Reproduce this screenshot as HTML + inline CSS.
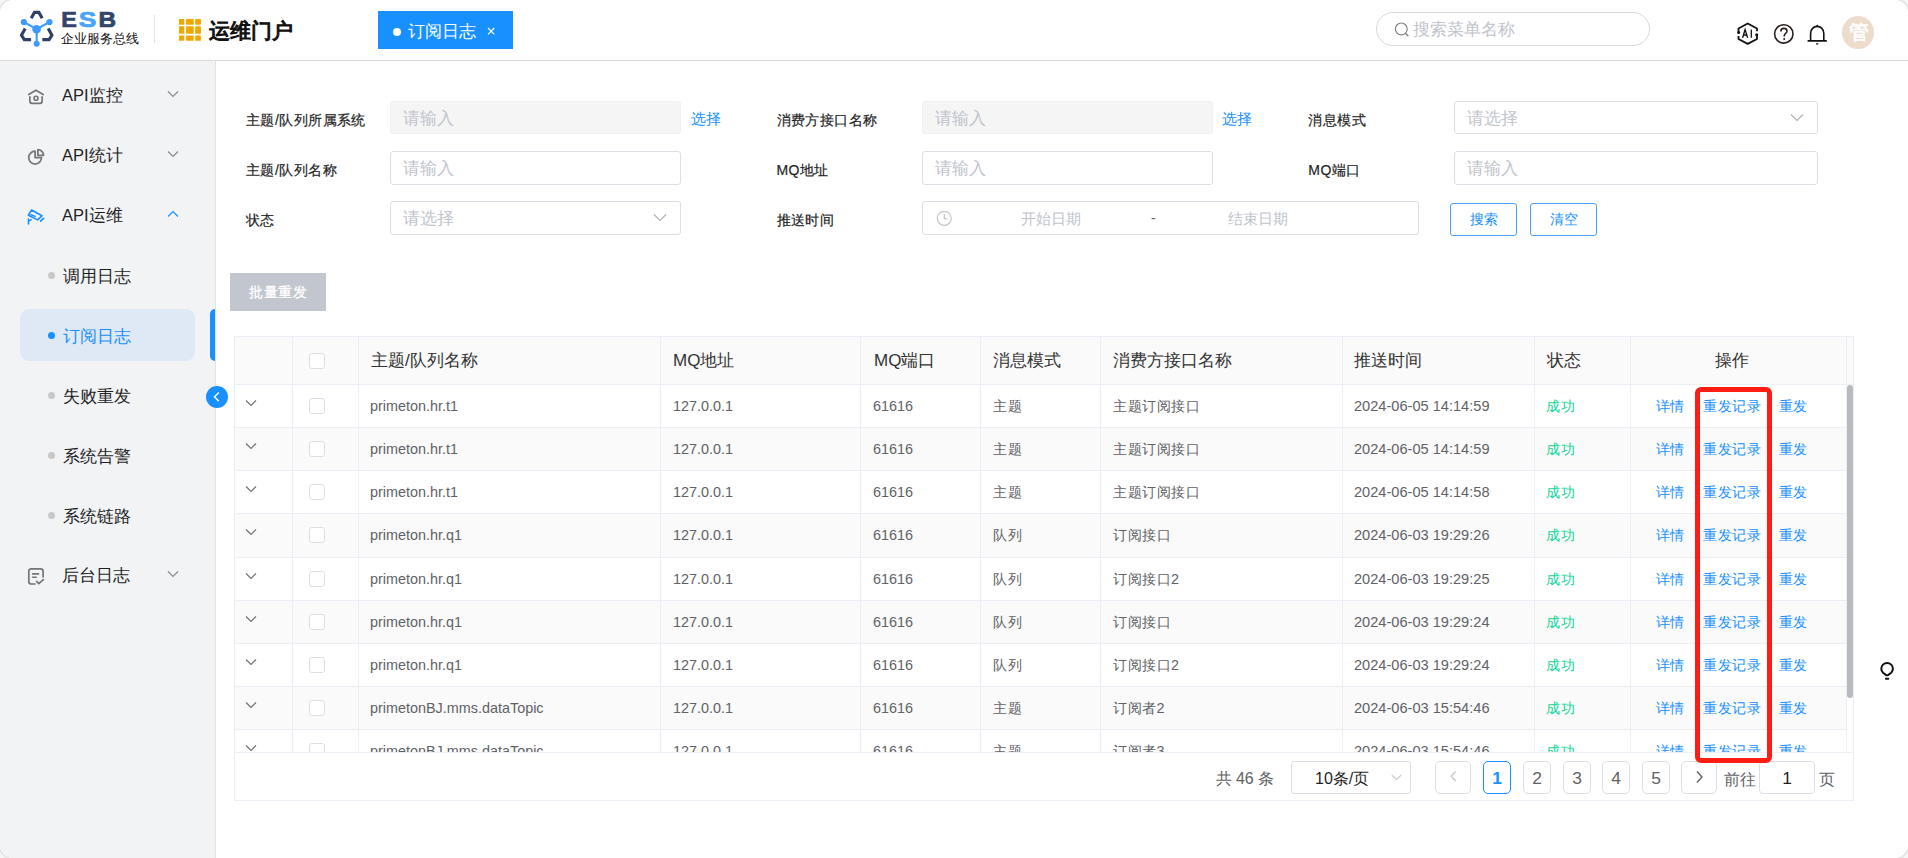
<!DOCTYPE html>
<html><head><meta charset="utf-8">
<style>
*{box-sizing:border-box;margin:0;padding:0}
html,body{width:1908px;height:858px;overflow:hidden;background:#f6f6f6}
body{font-family:"Liberation Sans",sans-serif;color:#303133;position:relative;-webkit-font-smoothing:antialiased}
.app{position:absolute;left:0;top:0;width:1908px;height:858px;background:#fff;border-radius:13px;overflow:hidden;box-shadow:0 0 2px 1px rgba(0,0,0,0.13)}
.abs{position:absolute}
.t{position:absolute;white-space:nowrap;line-height:1}
.hdr{position:absolute;left:0;top:0;width:1908px;height:61px;border-bottom:1px solid #dadada;background:#fff}
.side{position:absolute;left:0;top:61px;width:216px;height:797px;background:#f2f3f5;border-right:1px solid #e3e3e3}
.mi{position:absolute;left:62px;font-size:16.5px;color:#1f1f1f}
.dot{position:absolute;width:7px;height:7px;border-radius:50%;background:#c4c4c4}
.lbl{position:absolute;font-size:14px;letter-spacing:0.45px;color:#1f1f1f;line-height:1;-webkit-text-stroke:0.2px #1f1f1f}
.inp{position:absolute;height:33px;border:1px solid #dcdfe6;border-radius:3px;background:#fff}
.inp.dis{background:#f5f5f5;border-color:#f0f0f0}
.ph{position:absolute;left:12px;top:8.8px;font-size:16.6px;color:#c0c4cc;line-height:1;white-space:nowrap}
.link{position:absolute;font-size:14.6px;color:#1890ff;line-height:1}
.btn{position:absolute;height:33px;border:1px solid #4ba0f8;border-radius:3px;color:#1890ff;font-size:14.4px;text-align:center;line-height:31px;background:#fff}
.tbl{position:absolute;left:234px;top:336px;width:1620px;height:465px;border:1px solid #ebeef5}
.vl{position:absolute;width:1px;background:#ebeef5}
.hl{position:absolute;height:1px;background:#ebeef5}
.th{position:absolute;font-size:17px;color:#333;line-height:1;white-space:nowrap}
.td{position:absolute;font-size:14.4px;color:#606266;line-height:1;white-space:nowrap}
.cb{position:absolute;width:16px;height:16px;border:1px solid #dcdfe6;border-radius:3px;background:#fff}
.ok{color:#13d69b}
.op{color:#1890ff}
.pg{position:absolute;top:761px;height:33px;border:1px solid #dcdfe6;border-radius:5px;background:#fff;font-size:17.4px;color:#606266;text-align:center;line-height:33.5px}
</style></head><body><div class="app">

<div class="hdr">
<svg class="abs" style="left:0;top:0" width="60" height="60" viewBox="0 0 60 60">
<g fill="none" stroke="#2f3f6a" stroke-width="3.1" stroke-linejoin="miter" stroke-linecap="butt">
<path d="M31.2 18.2 L34.5 12.4 L38.9 12.4 L42.2 18.2"/>
<path d="M25.2 28.6 L21.5 35.3 L24.3 39.6 L31.1 39.6"/>
<path d="M48.2 28.6 L51.9 35.3 L49.1 39.6 L42.3 39.6"/>
</g>
<g fill="#3d9bfb" stroke="#3d9bfb">
<line x1="23.8" y1="22" x2="36.6" y2="29.2" stroke-width="2.1"/>
<line x1="49.5" y1="22" x2="36.6" y2="29.2" stroke-width="2.1"/>
<line x1="36.6" y1="29.2" x2="36.7" y2="43.7" stroke-width="2.1"/>
<circle cx="23.8" cy="22" r="3.1" stroke="none"/>
<circle cx="49.5" cy="22" r="3.1" stroke="none"/>
<circle cx="36.6" cy="29.2" r="4.3" stroke="none"/>
<circle cx="36.7" cy="43.7" r="3" stroke="none"/>
</g></svg>
<svg class="abs" style="left:0;top:0" width="130" height="32" viewBox="0 0 130 32"><g font-family="Liberation Sans" font-weight="bold" font-size="22.3" stroke-width="0.7">
<text x="61.2" y="26.9" textLength="15.6" lengthAdjust="spacingAndGlyphs" fill="#33446b" stroke="#33446b">E</text>
<text x="78.8" y="26.9" textLength="17.6" lengthAdjust="spacingAndGlyphs" fill="#4aa3fa" stroke="#4aa3fa">S</text>
<text x="98.6" y="26.9" textLength="17.6" lengthAdjust="spacingAndGlyphs" fill="#33446b" stroke="#33446b">B</text>
</g></svg>
<div class="t" style="left:61px;top:33px;font-size:12.65px;font-weight:500;color:#111">企业服务总线</div>
<div class="abs" style="left:154px;top:15px;width:1px;height:28px;background:#e0e3ea"></div>
<svg class="abs" style="left:179px;top:19px" width="22" height="22" viewBox="0 0 22 22"><g fill="#f0a800"><rect x="0.0" y="0.1" width="5.3" height="5.6" rx="0.6"/><rect x="0.0" y="7.3" width="5.3" height="7.5" rx="0.6"/><rect x="0.0" y="16.4" width="5.3" height="5.4" rx="0.6"/><rect x="7.1" y="0.1" width="7.6" height="5.6" rx="0.6"/><rect x="7.1" y="7.3" width="7.6" height="7.5" rx="0.6"/><rect x="7.1" y="16.4" width="7.6" height="5.4" rx="0.6"/><rect x="16.2" y="0.1" width="5.7" height="5.6" rx="0.6"/><rect x="16.2" y="7.3" width="5.7" height="7.5" rx="0.6"/><rect x="16.2" y="16.4" width="5.7" height="5.4" rx="0.6"/></g></svg>
<div class="t" style="left:209px;top:20.8px;font-size:21.3px;color:#111;-webkit-text-stroke:1.1px #111">运维门户</div>
<div class="abs" style="left:378px;top:11px;width:135px;height:38px;background:#1890ff"></div>
<div class="abs" style="left:393px;top:28px;width:8px;height:8px;border-radius:50%;background:#fff"></div>
<div class="t" style="left:407.7px;top:23px;font-size:17px;color:#fff">订阅日志</div>
<svg class="abs" style="left:486.5px;top:27.3px" width="8" height="8" viewBox="0 0 8 8"><path d="M1 1L7.3 7.3M7.3 1L1 7.3" stroke="#fff" stroke-width="1.1"/></svg>
<div class="abs" style="left:1376px;top:12px;width:274px;height:34px;border:1px solid #dadada;border-radius:17px"></div>
<svg class="abs" style="left:1394px;top:22px" width="16" height="16" viewBox="0 0 16 16"><circle cx="7.3" cy="6.9" r="5.9" fill="none" stroke="#808080" stroke-width="1.2"/><path d="M11.4 11.2L14.3 14.3" stroke="#808080" stroke-width="1.4"/></svg>
<div class="t" style="left:1413px;top:21.8px;font-size:16.8px;color:#c0c4cc">搜索菜单名称</div>
<svg class="abs" style="left:1732px;top:18px" width="30" height="30" viewBox="0 0 30 30">
<g fill="none" stroke="#111" stroke-width="1.8" stroke-linejoin="round">
<path d="M6.5 14.5 L6.5 10.5 L15.7 5.5 L25 10.5 L25 13.3"/>
<path d="M25 16.2 L25 21 L15.7 25.9 L6.5 21 L6.5 18"/>
<path d="M10.6 19.8 L13.1 11.6 L15.6 19.8 M11.5 17 L14.7 17" stroke-width="1.35" stroke-linejoin="miter"/>
<path d="M19.3 11.4 L19.3 19.8" stroke-width="1.3"/>
</g>
<circle cx="6.7" cy="14.6" r="1.5" fill="#111"/><circle cx="24.7" cy="16.7" r="1.5" fill="#111"/>
</svg>
<svg class="abs" style="left:1773px;top:23px" width="22" height="22" viewBox="0 0 22 22">
<circle cx="10.8" cy="10.9" r="9.2" fill="none" stroke="#2a1f1f" stroke-width="1.6"/>
<path d="M7.8 8.4 C7.8 6.5 9.2 5.4 10.9 5.4 C12.7 5.4 14 6.6 14 8.2 C14 10.2 11.2 10.6 11.2 12.9 L11.2 13.6" fill="none" stroke="#2a1f1f" stroke-width="1.6"/>
<circle cx="11.2" cy="16.1" r="1" fill="#2a1f1f"/>
</svg>
<svg class="abs" style="left:1806px;top:23px" width="23" height="23" viewBox="0 0 23 23">
<path d="M4.6 17.6 L4.6 10.4 C4.6 6.3 7.5 3.4 11.2 3.4 C14.9 3.4 17.8 6.3 17.8 10.4 L17.8 17.6" fill="none" stroke="#111" stroke-width="1.6"/>
<path d="M1.6 17.9 L20.8 17.9" stroke="#111" stroke-width="1.7"/>
<path d="M10.1 3.0 L11.2 1.6 L12.3 3.0Z" fill="#111"/>
<path d="M10.1 20.8 L12.3 20.8" stroke="#111" stroke-width="1.3"/>
</svg>
<div class="abs" style="left:1842px;top:16px;width:32px;height:33px;border-radius:50%;background:#eddccb"></div>
<div class="t" style="left:1848.5px;top:22.5px;font-size:19.5px;color:#fff;-webkit-text-stroke:0.7px #fff">管</div>
</div>
<div class="side"></div>
<div class="abs" style="left:20px;top:309px;width:175px;height:52px;border-radius:9px;background:#dfe9f5"></div>
<div class="abs" style="left:210px;top:309px;width:5px;height:52px;border-radius:5px 0 0 5px;background:#1890ff"></div>
<svg class="abs" style="left:20px;top:80px" width="32" height="32" viewBox="0 0 32 32">
<path d="M8.7 14.6 L15.9 10.3 L23.2 14.6" fill="none" stroke="#747678" stroke-width="1.7" stroke-linecap="round" stroke-linejoin="round"/>
<path d="M9.9 16.3 L9.9 21.3 Q9.9 23.3 11.9 23.3 L20.1 23.3 Q22.1 23.3 22.1 21.3 L22.1 16.3" fill="none" stroke="#747678" stroke-width="1.7"/>
<circle cx="16" cy="18.3" r="2.0" fill="none" stroke="#747678" stroke-width="1.6"/>
</svg>
<svg class="abs" style="left:20px;top:140px" width="32" height="32" viewBox="0 0 32 32">
<path d="M15.1 11.2 A6.4 6.4 0 1 0 21.5 17.6 L15.1 17.6 Z" fill="none" stroke="#747678" stroke-width="1.75" stroke-linejoin="round"/>
<path d="M17.9 9.7 L17.9 15.3 L23.5 15.3 A5.6 5.6 0 0 0 17.9 9.7 Z" fill="none" stroke="#747678" stroke-width="1.75" stroke-linejoin="round"/>
</svg>
<svg class="abs" style="left:20px;top:200px" width="32" height="32" viewBox="0 0 32 32">
<path d="M11.6 10.0 L22.0 15.8 L17.5 19.9 L8.4 15.2 Z" fill="none" stroke="#1890ff" stroke-width="1.6" stroke-linejoin="round"/>
<path d="M11 14.7 L15.2 16.4" stroke="#1890ff" stroke-width="1.5" stroke-linecap="round"/>
<path d="M8.5 19 L8.5 24 M8.5 21.4 L11.1 19.6" stroke="#1890ff" stroke-width="1.6" stroke-linecap="round"/>
<path d="M20.6 21.2 L23.6 18.4" stroke="#1890ff" stroke-width="1.7" stroke-linecap="round"/>
</svg>
<svg class="abs" style="left:20px;top:560px" width="32" height="32" viewBox="0 0 32 32">
<path d="M15.6 24 L11.3 24 Q8.8 24 8.8 21.5 L8.8 11.3 Q8.8 8.8 11.3 8.8 L20.6 8.8 Q23.1 8.8 23.1 11.3 L23.1 17.5" fill="none" stroke="#747678" stroke-width="1.7"/>
<path d="M12.6 13.9 L18.6 13.9 M12.6 17.3 L16.2 17.3" stroke="#747678" stroke-width="1.6" stroke-linecap="round"/>
<path d="M16.6 21.3 L18.8 23.6 L23.4 19.6" fill="none" stroke="#747678" stroke-width="1.7" stroke-linecap="round" stroke-linejoin="round"/>
</svg>
<div class="t mi" style="left:62px;top:87.4px;color:#1f1f1f">API监控</div>
<svg class="abs" style="left:167px;top:90px" width="12" height="8" viewBox="0 0 12 8"><path d="M1 1.5 L6 6.5 L11 1.5" fill="none" stroke="#8a8a8a" stroke-width="1.2"/></svg>
<div class="t mi" style="left:62px;top:147.4px;color:#1f1f1f">API统计</div>
<svg class="abs" style="left:167px;top:150px" width="12" height="8" viewBox="0 0 12 8"><path d="M1 1.5 L6 6.5 L11 1.5" fill="none" stroke="#8a8a8a" stroke-width="1.2"/></svg>
<div class="t mi" style="left:62px;top:207.4px;color:#1f1f1f">API运维</div>
<svg class="abs" style="left:167px;top:210px" width="12" height="8" viewBox="0 0 12 8"><path d="M1 6.5 L6 1.5 L11 6.5" fill="none" stroke="#1890ff" stroke-width="1.2"/></svg>
<div class="t mi" style="left:63px;top:268px;color:#1f1f1f">调用日志</div>
<div class="dot" style="left:48px;top:271.5px;background:#c8c8c8"></div>
<div class="t mi" style="left:63px;top:328px;color:#1890ff">订阅日志</div>
<div class="dot" style="left:48px;top:331.5px;background:#1890ff"></div>
<div class="t mi" style="left:63px;top:388px;color:#1f1f1f">失败重发</div>
<div class="dot" style="left:48px;top:391.5px;background:#c8c8c8"></div>
<div class="t mi" style="left:63px;top:448px;color:#1f1f1f">系统告警</div>
<div class="dot" style="left:48px;top:451.5px;background:#c8c8c8"></div>
<div class="t mi" style="left:63px;top:508px;color:#1f1f1f">系统链路</div>
<div class="dot" style="left:48px;top:511.5px;background:#c8c8c8"></div>
<div class="t mi" style="left:62px;top:567.4px;color:#1f1f1f">后台日志</div>
<svg class="abs" style="left:167px;top:570px" width="12" height="8" viewBox="0 0 12 8"><path d="M1 1.5 L6 6.5 L11 1.5" fill="none" stroke="#8a8a8a" stroke-width="1.2"/></svg>
<div class="abs" style="left:206px;top:386px;width:22px;height:22px;border-radius:50%;background:#1890ff"></div>
<svg class="abs" style="left:206px;top:386px" width="22" height="22" viewBox="0 0 22 22"><path d="M12.8 6.5 L8.5 10.8 L12.8 15.2" fill="none" stroke="#fff" stroke-width="1.4"/></svg>
<div class="lbl" style="left:246px;top:112.6px">主题/队列所属系统</div>
<div class="inp dis" style="left:390px;top:101px;width:291px;height:33px"><div class="ph">请输入</div></div>
<div class="link" style="left:690.7px;top:111.7px">选择</div>
<div class="lbl" style="left:246px;top:162.6px">主题/队列名称</div>
<div class="inp" style="left:390px;top:151px;width:291px;height:34px"><div class="ph">请输入</div></div>
<div class="lbl" style="left:246px;top:212.6px">状态</div>
<div class="inp" style="left:390px;top:201px;width:291px;height:34px"><div class="ph">请选择</div><svg class="abs" style="right:13px;top:11px" width="14" height="9" viewBox="0 0 14 9"><path d="M1 1.5 L7 7.5 L13 1.5" fill="none" stroke="#b0b3b8" stroke-width="1.2"/></svg></div>
<div class="lbl" style="left:776.5px;top:112.6px">消费方接口名称</div>
<div class="inp dis" style="left:922px;top:101px;width:291px;height:33px"><div class="ph">请输入</div></div>
<div class="link" style="left:1222.3px;top:111.7px">选择</div>
<div class="lbl" style="left:776.5px;top:162.6px">MQ地址</div>
<div class="inp" style="left:922px;top:151px;width:291px;height:34px"><div class="ph">请输入</div></div>
<div class="lbl" style="left:776.5px;top:212.6px">推送时间</div>
<div class="inp" style="left:922px;top:201px;width:497px;height:34px"></div>
<svg class="abs" style="left:936px;top:210px" width="17" height="17" viewBox="0 0 17 17"><circle cx="8.3" cy="8.3" r="7" fill="none" stroke="#c0c4cc" stroke-width="1.2"/><path d="M8.3 4 L8.3 8.6 L11.4 8.6" fill="none" stroke="#c0c4cc" stroke-width="1.2"/></svg>
<div class="t" style="left:1020.5px;top:210.5px;font-size:15px;color:#c0c4cc">开始日期</div>
<div class="t" style="left:1151px;top:211px;font-size:14.4px;color:#606266">-</div>
<div class="t" style="left:1228px;top:210.5px;font-size:15px;color:#c0c4cc">结束日期</div>
<div class="lbl" style="left:1308.3px;top:112.6px">消息模式</div>
<div class="inp" style="left:1454px;top:101px;width:364px;height:33px"><div class="ph">请选择</div><svg class="abs" style="right:13px;top:11px" width="14" height="9" viewBox="0 0 14 9"><path d="M1 1.5 L7 7.5 L13 1.5" fill="none" stroke="#b0b3b8" stroke-width="1.2"/></svg></div>
<div class="lbl" style="left:1308.3px;top:162.6px">MQ端口</div>
<div class="inp" style="left:1454px;top:151px;width:364px;height:34px"><div class="ph">请输入</div></div>
<div class="btn" style="left:1450px;top:203px;width:67px">搜索</div>
<div class="btn" style="left:1530px;top:203px;width:67px">清空</div>
<div class="abs" style="left:230px;top:273px;width:96px;height:38px;background:#c1c6cf"></div>
<div class="t" style="left:249px;top:284.5px;font-size:14px;letter-spacing:0.5px;color:#fff;-webkit-text-stroke:0.3px #fff">批量重发</div>
<div class="tbl"></div>
<div class="abs" style="left:235px;top:337px;width:1618px;height:47px;background:#fafafa"></div>
<div class="abs" style="left:235px;top:385px;width:1611px;height:42px;background:#fff"></div>
<div class="hl" style="left:235px;top:427px;width:1611px"></div>
<div class="abs" style="left:235px;top:428px;width:1611px;height:42px;background:#fafafa"></div>
<div class="hl" style="left:235px;top:470px;width:1611px"></div>
<div class="abs" style="left:235px;top:471px;width:1611px;height:42px;background:#fff"></div>
<div class="hl" style="left:235px;top:513px;width:1611px"></div>
<div class="abs" style="left:235px;top:514px;width:1611px;height:43px;background:#fafafa"></div>
<div class="hl" style="left:235px;top:557px;width:1611px"></div>
<div class="abs" style="left:235px;top:558px;width:1611px;height:42px;background:#fff"></div>
<div class="hl" style="left:235px;top:600px;width:1611px"></div>
<div class="abs" style="left:235px;top:601px;width:1611px;height:42px;background:#fafafa"></div>
<div class="hl" style="left:235px;top:643px;width:1611px"></div>
<div class="abs" style="left:235px;top:644px;width:1611px;height:42px;background:#fff"></div>
<div class="hl" style="left:235px;top:686px;width:1611px"></div>
<div class="abs" style="left:235px;top:687px;width:1611px;height:42px;background:#fafafa"></div>
<div class="hl" style="left:235px;top:729px;width:1611px"></div>
<div class="abs" style="left:235px;top:730px;width:1611px;height:22px;background:#fff"></div>
<div class="hl" style="left:235px;top:384px;width:1618px"></div>
<div class="hl" style="left:235px;top:752px;width:1618px"></div>
<div class="vl" style="left:292px;top:337px;height:415px"></div>
<div class="vl" style="left:358px;top:337px;height:415px"></div>
<div class="vl" style="left:660px;top:337px;height:415px"></div>
<div class="vl" style="left:860px;top:337px;height:415px"></div>
<div class="vl" style="left:980px;top:337px;height:415px"></div>
<div class="vl" style="left:1100px;top:337px;height:415px"></div>
<div class="vl" style="left:1342px;top:337px;height:415px"></div>
<div class="vl" style="left:1534px;top:337px;height:415px"></div>
<div class="vl" style="left:1630px;top:337px;height:415px"></div>
<div class="vl" style="left:1846px;top:337px;height:415px"></div>
<div class="th" style="left:371px;top:352.3px">主题/队列名称</div>
<div class="th" style="left:673px;top:352.3px">MQ地址</div>
<div class="th" style="left:874px;top:352.3px">MQ端口</div>
<div class="th" style="left:993px;top:352.3px">消息模式</div>
<div class="th" style="left:1113px;top:352.3px">消费方接口名称</div>
<div class="th" style="left:1354px;top:352.3px">推送时间</div>
<div class="th" style="left:1547px;top:352.3px">状态</div>
<div class="th" style="left:1715px;top:352.3px">操作</div>
<div class="cb" style="left:309px;top:353px"></div>
<div class="abs" style="left:235px;top:385px;width:1611px;height:367px;overflow:hidden">
<svg class="abs" style="left:9.5px;top:14.0px" width="12" height="8" viewBox="0 0 12 8"><path d="M1 1.5 L6 6.5 L11 1.5" fill="none" stroke="#6e6e6e" stroke-width="1.1"/></svg>
<div class="cb" style="left:74px;top:13.0px"></div>
<div class="td" style="left:135px;top:14.0px;">primeton.hr.t1</div>
<div class="td" style="left:438px;top:14.0px;">127.0.0.1</div>
<div class="td" style="left:638px;top:14.0px;">61616</div>
<div class="td" style="left:758px;top:14.0px;letter-spacing:0.5px;">主题</div>
<div class="td" style="left:878px;top:14.0px;letter-spacing:0.5px;">主题订阅接口</div>
<div class="td" style="left:1119px;top:14.0px;font-size:14.6px;">2024-06-05 14:14:59</div>
<div class="td ok" style="left:1311px;top:14.0px;letter-spacing:0.6px">成功</div>
<div class="td op" style="left:1421px;top:14.0px">详情</div>
<div class="td op" style="left:1468px;top:14.0px;letter-spacing:0.5px">重发记录</div>
<div class="td op" style="left:1544px;top:14.0px">重发</div>
<svg class="abs" style="left:9.5px;top:57.125px" width="12" height="8" viewBox="0 0 12 8"><path d="M1 1.5 L6 6.5 L11 1.5" fill="none" stroke="#6e6e6e" stroke-width="1.1"/></svg>
<div class="cb" style="left:74px;top:56.125px"></div>
<div class="td" style="left:135px;top:57.125px;">primeton.hr.t1</div>
<div class="td" style="left:438px;top:57.125px;">127.0.0.1</div>
<div class="td" style="left:638px;top:57.125px;">61616</div>
<div class="td" style="left:758px;top:57.125px;letter-spacing:0.5px;">主题</div>
<div class="td" style="left:878px;top:57.125px;letter-spacing:0.5px;">主题订阅接口</div>
<div class="td" style="left:1119px;top:57.125px;font-size:14.6px;">2024-06-05 14:14:59</div>
<div class="td ok" style="left:1311px;top:57.125px;letter-spacing:0.6px">成功</div>
<div class="td op" style="left:1421px;top:57.125px">详情</div>
<div class="td op" style="left:1468px;top:57.125px;letter-spacing:0.5px">重发记录</div>
<div class="td op" style="left:1544px;top:57.125px">重发</div>
<svg class="abs" style="left:9.5px;top:100.25px" width="12" height="8" viewBox="0 0 12 8"><path d="M1 1.5 L6 6.5 L11 1.5" fill="none" stroke="#6e6e6e" stroke-width="1.1"/></svg>
<div class="cb" style="left:74px;top:99.25px"></div>
<div class="td" style="left:135px;top:100.25px;">primeton.hr.t1</div>
<div class="td" style="left:438px;top:100.25px;">127.0.0.1</div>
<div class="td" style="left:638px;top:100.25px;">61616</div>
<div class="td" style="left:758px;top:100.25px;letter-spacing:0.5px;">主题</div>
<div class="td" style="left:878px;top:100.25px;letter-spacing:0.5px;">主题订阅接口</div>
<div class="td" style="left:1119px;top:100.25px;font-size:14.6px;">2024-06-05 14:14:58</div>
<div class="td ok" style="left:1311px;top:100.25px;letter-spacing:0.6px">成功</div>
<div class="td op" style="left:1421px;top:100.25px">详情</div>
<div class="td op" style="left:1468px;top:100.25px;letter-spacing:0.5px">重发记录</div>
<div class="td op" style="left:1544px;top:100.25px">重发</div>
<svg class="abs" style="left:9.5px;top:143.375px" width="12" height="8" viewBox="0 0 12 8"><path d="M1 1.5 L6 6.5 L11 1.5" fill="none" stroke="#6e6e6e" stroke-width="1.1"/></svg>
<div class="cb" style="left:74px;top:142.375px"></div>
<div class="td" style="left:135px;top:143.375px;">primeton.hr.q1</div>
<div class="td" style="left:438px;top:143.375px;">127.0.0.1</div>
<div class="td" style="left:638px;top:143.375px;">61616</div>
<div class="td" style="left:758px;top:143.375px;letter-spacing:0.5px;">队列</div>
<div class="td" style="left:878px;top:143.375px;letter-spacing:0.5px;">订阅接口</div>
<div class="td" style="left:1119px;top:143.375px;font-size:14.6px;">2024-06-03 19:29:26</div>
<div class="td ok" style="left:1311px;top:143.375px;letter-spacing:0.6px">成功</div>
<div class="td op" style="left:1421px;top:143.375px">详情</div>
<div class="td op" style="left:1468px;top:143.375px;letter-spacing:0.5px">重发记录</div>
<div class="td op" style="left:1544px;top:143.375px">重发</div>
<svg class="abs" style="left:9.5px;top:186.5px" width="12" height="8" viewBox="0 0 12 8"><path d="M1 1.5 L6 6.5 L11 1.5" fill="none" stroke="#6e6e6e" stroke-width="1.1"/></svg>
<div class="cb" style="left:74px;top:185.5px"></div>
<div class="td" style="left:135px;top:186.5px;">primeton.hr.q1</div>
<div class="td" style="left:438px;top:186.5px;">127.0.0.1</div>
<div class="td" style="left:638px;top:186.5px;">61616</div>
<div class="td" style="left:758px;top:186.5px;letter-spacing:0.5px;">队列</div>
<div class="td" style="left:878px;top:186.5px;letter-spacing:0.5px;">订阅接口2</div>
<div class="td" style="left:1119px;top:186.5px;font-size:14.6px;">2024-06-03 19:29:25</div>
<div class="td ok" style="left:1311px;top:186.5px;letter-spacing:0.6px">成功</div>
<div class="td op" style="left:1421px;top:186.5px">详情</div>
<div class="td op" style="left:1468px;top:186.5px;letter-spacing:0.5px">重发记录</div>
<div class="td op" style="left:1544px;top:186.5px">重发</div>
<svg class="abs" style="left:9.5px;top:229.625px" width="12" height="8" viewBox="0 0 12 8"><path d="M1 1.5 L6 6.5 L11 1.5" fill="none" stroke="#6e6e6e" stroke-width="1.1"/></svg>
<div class="cb" style="left:74px;top:228.625px"></div>
<div class="td" style="left:135px;top:229.625px;">primeton.hr.q1</div>
<div class="td" style="left:438px;top:229.625px;">127.0.0.1</div>
<div class="td" style="left:638px;top:229.625px;">61616</div>
<div class="td" style="left:758px;top:229.625px;letter-spacing:0.5px;">队列</div>
<div class="td" style="left:878px;top:229.625px;letter-spacing:0.5px;">订阅接口</div>
<div class="td" style="left:1119px;top:229.625px;font-size:14.6px;">2024-06-03 19:29:24</div>
<div class="td ok" style="left:1311px;top:229.625px;letter-spacing:0.6px">成功</div>
<div class="td op" style="left:1421px;top:229.625px">详情</div>
<div class="td op" style="left:1468px;top:229.625px;letter-spacing:0.5px">重发记录</div>
<div class="td op" style="left:1544px;top:229.625px">重发</div>
<svg class="abs" style="left:9.5px;top:272.75px" width="12" height="8" viewBox="0 0 12 8"><path d="M1 1.5 L6 6.5 L11 1.5" fill="none" stroke="#6e6e6e" stroke-width="1.1"/></svg>
<div class="cb" style="left:74px;top:271.75px"></div>
<div class="td" style="left:135px;top:272.75px;">primeton.hr.q1</div>
<div class="td" style="left:438px;top:272.75px;">127.0.0.1</div>
<div class="td" style="left:638px;top:272.75px;">61616</div>
<div class="td" style="left:758px;top:272.75px;letter-spacing:0.5px;">队列</div>
<div class="td" style="left:878px;top:272.75px;letter-spacing:0.5px;">订阅接口2</div>
<div class="td" style="left:1119px;top:272.75px;font-size:14.6px;">2024-06-03 19:29:24</div>
<div class="td ok" style="left:1311px;top:272.75px;letter-spacing:0.6px">成功</div>
<div class="td op" style="left:1421px;top:272.75px">详情</div>
<div class="td op" style="left:1468px;top:272.75px;letter-spacing:0.5px">重发记录</div>
<div class="td op" style="left:1544px;top:272.75px">重发</div>
<svg class="abs" style="left:9.5px;top:315.875px" width="12" height="8" viewBox="0 0 12 8"><path d="M1 1.5 L6 6.5 L11 1.5" fill="none" stroke="#6e6e6e" stroke-width="1.1"/></svg>
<div class="cb" style="left:74px;top:314.875px"></div>
<div class="td" style="left:135px;top:315.875px;">primetonBJ.mms.dataTopic</div>
<div class="td" style="left:438px;top:315.875px;">127.0.0.1</div>
<div class="td" style="left:638px;top:315.875px;">61616</div>
<div class="td" style="left:758px;top:315.875px;letter-spacing:0.5px;">主题</div>
<div class="td" style="left:878px;top:315.875px;letter-spacing:0.5px;">订阅者2</div>
<div class="td" style="left:1119px;top:315.875px;font-size:14.6px;">2024-06-03 15:54:46</div>
<div class="td ok" style="left:1311px;top:315.875px;letter-spacing:0.6px">成功</div>
<div class="td op" style="left:1421px;top:315.875px">详情</div>
<div class="td op" style="left:1468px;top:315.875px;letter-spacing:0.5px">重发记录</div>
<div class="td op" style="left:1544px;top:315.875px">重发</div>
<svg class="abs" style="left:9.5px;top:359.0px" width="12" height="8" viewBox="0 0 12 8"><path d="M1 1.5 L6 6.5 L11 1.5" fill="none" stroke="#6e6e6e" stroke-width="1.1"/></svg>
<div class="cb" style="left:74px;top:358.0px"></div>
<div class="td" style="left:135px;top:359.0px;">primetonBJ.mms.dataTopic</div>
<div class="td" style="left:438px;top:359.0px;">127.0.0.1</div>
<div class="td" style="left:638px;top:359.0px;">61616</div>
<div class="td" style="left:758px;top:359.0px;letter-spacing:0.5px;">主题</div>
<div class="td" style="left:878px;top:359.0px;letter-spacing:0.5px;">订阅者3</div>
<div class="td" style="left:1119px;top:359.0px;font-size:14.6px;">2024-06-03 15:54:46</div>
<div class="td ok" style="left:1311px;top:359.0px;letter-spacing:0.6px">成功</div>
<div class="td op" style="left:1421px;top:359.0px">详情</div>
<div class="td op" style="left:1468px;top:359.0px;letter-spacing:0.5px">重发记录</div>
<div class="td op" style="left:1544px;top:359.0px">重发</div>
</div>
<div class="abs" style="left:1847px;top:385px;width:6px;height:313px;border-radius:3px;background:#b9babd"></div>
<div class="t" style="left:1215.5px;top:770.5px;font-size:16px;color:#606266">共 46 条</div>
<div class="pg" style="left:1291px;width:120px;border-radius:3px"></div>
<div class="t" style="left:1315px;top:770.5px;font-size:16px;color:#1f1f1f">10条/页</div>
<svg class="abs" style="left:1391px;top:774px" width="11" height="7" viewBox="0 0 11 7"><path d="M0.8 1 L5.5 5.7 L10.2 1" fill="none" stroke="#c8cbd0" stroke-width="1.1"/></svg>
<div class="pg" style="left:1435px;width:36px"></div>
<svg class="abs" style="left:1449px;top:770px" width="9" height="13" viewBox="0 0 9 13"><path d="M6.6 1.5 L2.2 6.3 L6.6 11" fill="none" stroke="#c0c4cc" stroke-width="1.3"/></svg>
<div class="pg" style="left:1483px;width:28px;border-color:#1890ff;color:#1890ff;font-weight:bold">1</div>
<div class="pg" style="left:1523px;width:28px">2</div>
<div class="pg" style="left:1563px;width:28px">3</div>
<div class="pg" style="left:1602px;width:28px">4</div>
<div class="pg" style="left:1642px;width:28px">5</div>
<div class="pg" style="left:1681px;width:36px"></div>
<svg class="abs" style="left:1695px;top:770px" width="9" height="14" viewBox="0 0 9 14"><path d="M2 1.5 L7 7 L2 12.5" fill="none" stroke="#606266" stroke-width="1.4"/></svg>
<div class="t" style="left:1723.5px;top:771.5px;font-size:16px;color:#606266">前往</div>
<div class="pg" style="left:1759px;width:56px;border-radius:4px;color:#1f1f1f">1</div>
<div class="t" style="left:1819px;top:771.5px;font-size:16px;color:#606266">页</div>
<div class="abs" style="left:1694.5px;top:387px;width:77px;height:376px;border:5px solid #ff1c12;border-radius:6px"></div>
<svg class="abs" style="left:1879px;top:661px" width="16" height="20" viewBox="0 0 16 20">
<path d="M4.0 11.8 A5.8 5.8 0 1 1 12.2 11.8 L9.3 13.9 Q8.1 14.7 6.9 13.9 Z" fill="none" stroke="#111" stroke-width="2" stroke-linejoin="round"/>
<path d="M6.9 17.7 L9.3 17.7" stroke="#111" stroke-width="2" stroke-linecap="round"/>
</svg>
</div></body></html>
